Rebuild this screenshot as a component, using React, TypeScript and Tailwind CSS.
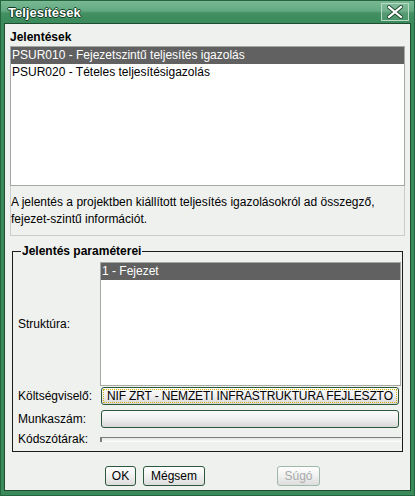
import React from 'react'

const reports = [
  'PSUR010 - Fejezetszintű teljesítés igazolás',
  'PSUR020 - Tételes teljesítésigazolás',
]

const DialogButton = ({
  label,
  disabled,
  className,
}: {
  label: string
  disabled?: boolean
  className: string
}) => (
  <button
    disabled={disabled}
    className={`h-[20px] shrink-0 rounded-[3px] border text-center leading-[18px] bg-[linear-gradient(#ffffff,#f1f2f1_45%,#dcdddc)] ${
      disabled ? 'border-[#9fb8a8] text-[#a9aba9]' : 'border-[#2b573c] text-black'
    } ${className}`}
  >
    {label}
  </button>
)

const Field = ({ children }: { children?: React.ReactNode }) => (
  <div className="ml-[1px] mr-[2px] h-[18px] min-w-0 flex-1 rounded-[3px] border border-[#2a563b] bg-[linear-gradient(#fbfbfb,#f0f0f0_50%,#d6d6d6)] p-[1px]">
    {children}
  </div>
)

export default function App() {
  return (
    <div className="flex h-[496px] w-[415px] flex-col border border-[#24673f] bg-[#3a8a5b] font-['Liberation_Sans',Arial,sans-serif] text-[12px] text-black">
      <div className="flex h-[22px] items-center justify-between bg-[linear-gradient(#79b994,#62a980_45%,#438f62_55%,#3a8a5b)] pl-[7px] pr-[5px]">
        <span className="text-[13px] font-bold leading-[15px] text-white [text-shadow:1px_0_0_#103a22,-1px_0_0_#103a22,0_1px_0_#103a22,0_-1px_0_#103a22]">
          Teljesítések
        </span>
        <button className="flex h-[18px] w-[28px] items-center justify-center border border-[#b9dac6] bg-[#ffffff1a]">
          <svg width="16" height="14" viewBox="0 0 16 14">
            <path d="M2 2L14 12M14 2L2 12" stroke="#1d4a2f" strokeWidth="4" strokeLinecap="square" />
            <path d="M2 2L14 12M14 2L2 12" stroke="#ffffff" strokeWidth="2.2" strokeLinecap="square" />
          </svg>
        </button>
      </div>

      <div className="mx-[3px] mb-[4px] flex flex-1 flex-col border border-[#1f4d31] bg-[#eff1ef] px-[5px] pt-[6px]">
        <div className="font-bold leading-[15px]">Jelentések</div>
        <div className="mt-[1px] h-[140px] border border-[#a5a8a5] bg-white">
          {reports.map((r, i) => (
            <div
              key={r}
              className={`h-[17px] pl-[1px] leading-[17px] ${i === 0 ? 'bg-[#616161] text-white' : ''}`}
            >
              {r}
            </div>
          ))}
        </div>
        <div className="border-x border-b border-[#cacdca] pb-[7px] pt-[8px] leading-[17px]">
          A jelentés a projektben kiállított teljesítés igazolásokról ad összegző,
          <br />
          fejezet-szintű információt.
        </div>

        <fieldset className="mx-[2px] mt-[8px] min-w-0 border border-[#1b1b1b] pb-[5px] pl-[5px] pr-[1px]">
          <legend className="ml-[3px] px-[1px] font-bold leading-[15px]">Jelentés paraméterei</legend>
          <div className="mt-[3px] flex items-center">
            <span className="w-[82px] shrink-0">Struktúra:</span>
            <div className="h-[124px] min-w-0 flex-1 border border-[#a5a8a5] bg-white">
              <div className="h-[17px] bg-[#616161] pl-[1px] leading-[17px] text-white">1 - Fejezet</div>
            </div>
          </div>
          <div className="mt-[1px] flex items-center">
            <span className="w-[82px] shrink-0">Költségviselő:</span>
            <Field>
              <div className="h-full overflow-hidden whitespace-nowrap border border-dotted border-[#d8b400] pl-[3px] text-[12px] leading-[12px] tracking-[-0.15px]">
                NIF ZRT - NEMZETI INFRASTRUKTÚRA FEJLESZTŐ
              </div>
            </Field>
          </div>
          <div className="mt-[5px] flex items-center">
            <span className="w-[82px] shrink-0">Munkaszám:</span>
            <Field />
          </div>
          <div className="mt-[4px] flex h-[14px] items-center">
            <span className="w-[82px] shrink-0">Kódszótárak:</span>
            <div className="h-[5px] min-w-0 flex-1 border-l-2 border-t border-[#7d7f7d] bg-[linear-gradient(#e4e4e4,#ffffff)]" />
          </div>
        </fieldset>

        <div className="mt-[14px] flex">
          <DialogButton label="OK" className="ml-[95px] w-[31px]" />
          <DialogButton label="Mégsem" className="ml-[7px] w-[62px]" />
          <DialogButton label="Súgó" disabled className="ml-[72px] w-[43px]" />
        </div>
      </div>
    </div>
  )
}
